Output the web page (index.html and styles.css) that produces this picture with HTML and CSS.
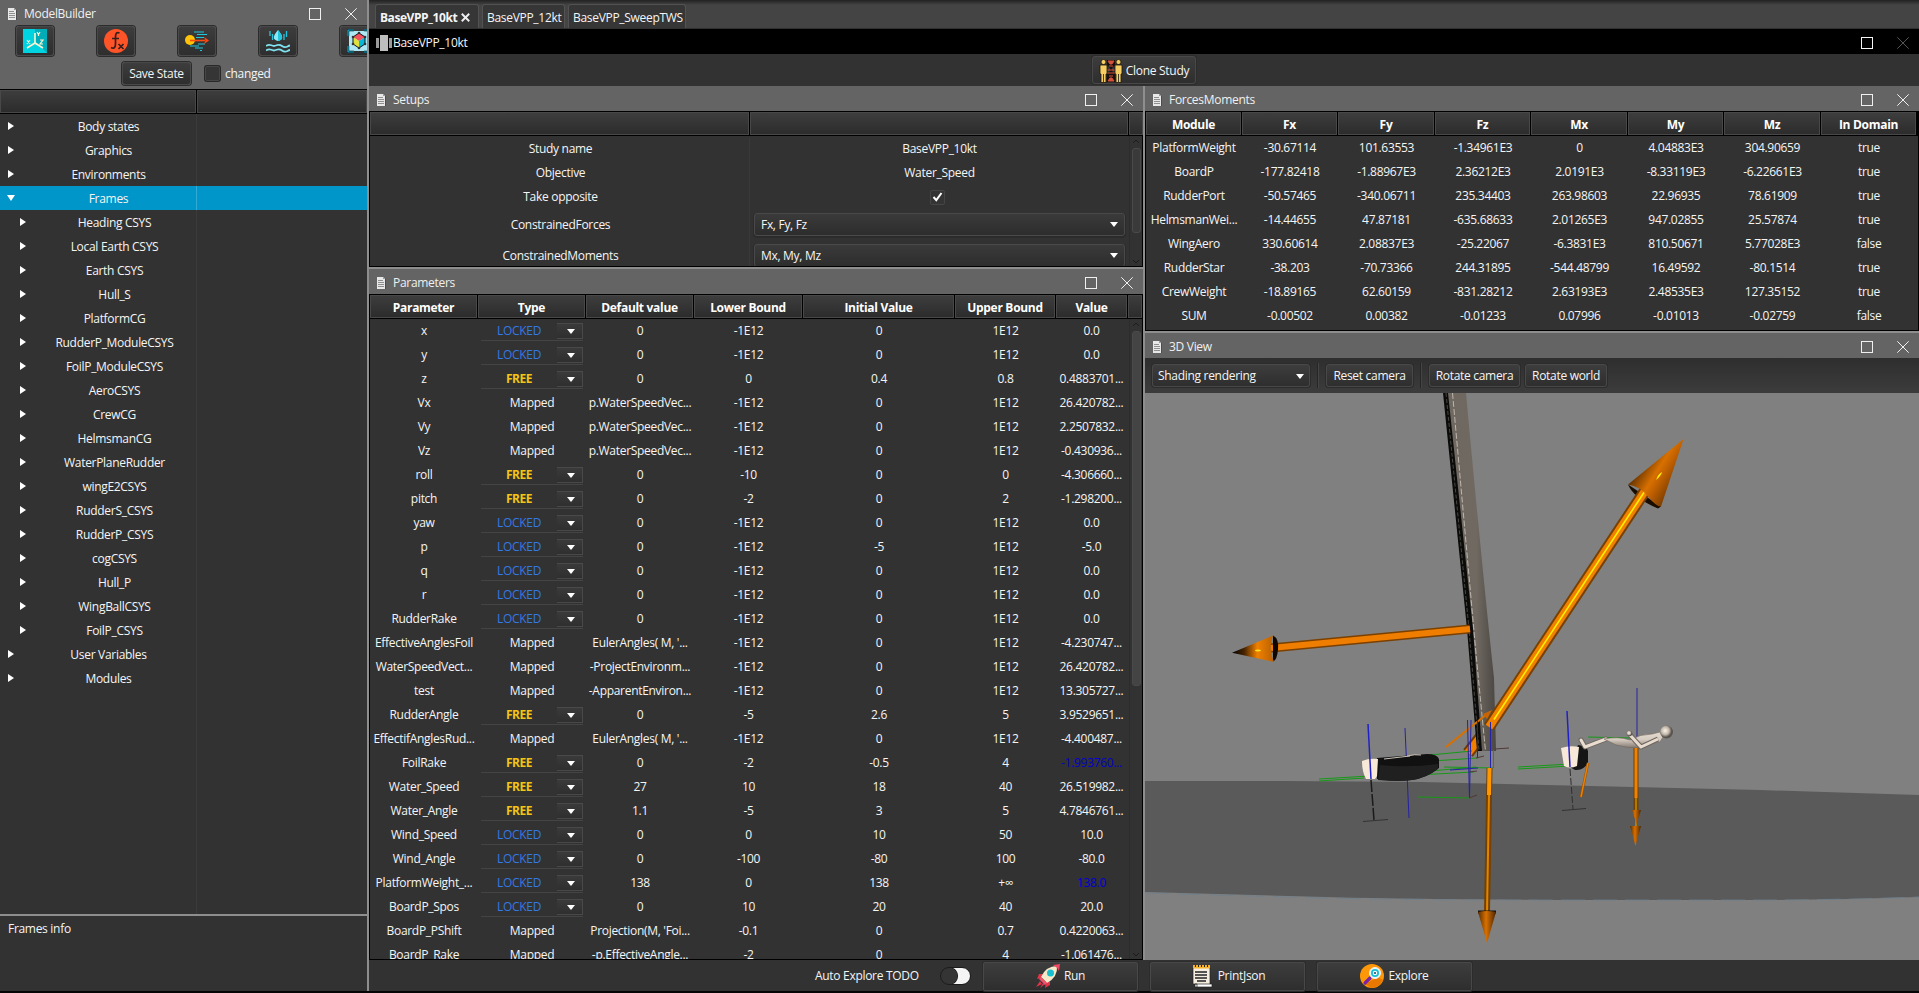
FILE: index.html
```html
<!DOCTYPE html>
<html lang="en">
<head>
<meta charset="utf-8">
<title>ModelBuilder</title>
<link rel="stylesheet" href="styles.css">
</head>
<body>
<svg class="defs" width="0" height="0">
  <symbol id="doc" viewBox="0 0 10 13"><path d="M1 1h6l2 2v10H1z" fill="#e8e8e8"/><path d="M7 1l2 2H7z" fill="#999"/><path d="M2 4.5h5M2 6.5h6M2 8.5h6M2 10.5h6" stroke="#8f8f8f"/><path d="M9.5 3v10" stroke="#4c4c4c"/></symbol>
  <symbol id="max" viewBox="0 0 12 12"><rect x=".5" y=".5" width="11" height="11" fill="none" stroke="currentColor"/></symbol>
  <symbol id="close" viewBox="0 0 12 12"><path d="M.3.3l11.4 11.4M11.7.3L.3 11.7" fill="none" stroke="currentColor"/></symbol>
</svg>
<div class="app">
  <aside class="builder">
    <div class="head">
      <div class="title"><svg class="doc"><use href="#doc"/></svg><span>ModelBuilder</span><svg class="win"><use href="#max"/></svg><svg class="win"><use href="#close"/></svg></div>
      <div class="tools">
        <button class="btn tool"><svg viewBox="0 0 24 24"><rect width="24" height="24" fill="#00d3e0"/><path d="M12 0h12v24L12 12z" fill="#00acb8"/><path d="M12 4v10L4 19M12 14l8 5" fill="none" stroke="#fff3cf" stroke-width="1.6"/><path d="M14 3l1.5 2.500L17 3M15.500 5v2M4 11l3 4M7 11l-3 4M17 11h3l-3 4h3" fill="none" stroke="#fff3cf" stroke-width="1.200"/></svg></button>
        <button class="btn tool"><svg viewBox="0 0 24 24"><circle cx="12" cy="12" r="12" fill="#ff5428"/><path d="M15.500 4c-3-1.500-4 1-4 4v7c0 4-2 5-4.500 3.500M8 9.500h7M14.500 15l5 5M19.500 15l-5 5" fill="none" stroke="#33201c" stroke-width="1.700"/></svg></button>
        <button class="btn tool"><svg viewBox="0 0 24 24"><path d="M9 3h10M12 5.500h10M11 8.500h8M5 17h9M13 15h7M10 19h8M15 21.500h2" stroke="#20c8df" stroke-width="1.200"/><circle cx="5" cy="11" r="5" fill="#ffc408"/><path d="M5 11.500h15" stroke="#ff4a12" stroke-width="1.600"/><path d="M19 8l5 3.500-5 3.500 1.500-3.500z" fill="#ff4a12"/></svg></button>
        <button class="btn tool"><svg viewBox="0 0 24 24"><path d="M12 1c6 7 5 10 0 11-5-1-6-4 0-11z" fill="#8ce8f5"/><path d="M12 1c6 7 5 10 0 11z" fill="#22c7df"/><path d="M4 2v5M6.500 5v6M18 5v6M20.500 2v6" stroke="#25c6dd" stroke-width="1.300"/><path d="M0 17c4-3 5 0 8 0s4-3 8 0 5 0 8-.5M0 21.500c4-3 5 0 8 0s4-3 8 0 5 0 8-.5" fill="none" stroke="#7fe3f2" stroke-width="1.800"/></svg></button>
        <button class="btn tool"><svg viewBox="0 0 24 24"><rect x="2" y="2" width="20" height="20" fill="#aee8f5"/><path d="M1 7V1h6M17 1h6v6M1 17v6h6M17 23h6v-6" fill="none" stroke="#000" stroke-width="2.400"/><path d="M1 7V1h6M17 1h6v6M1 17v6h6M17 23h6v-6" fill="none" stroke="#18bfe8" stroke-width="1.200"/><path d="M12 4l6 4-6 4-6-4z" fill="#f5505e"/><path d="M6 8l6 4v7l-6-4z" fill="#dfe13d"/><path d="M18 8l-6 4v7l6-4z" fill="#08b8d8"/><path d="M12 4l6 4v7l-6 4-6-4V8z" fill="none" stroke="#151515"/><g fill="#333"><circle cx="12" cy="4" r="1.300"/><circle cx="18" cy="8" r="1.300"/><circle cx="6" cy="8" r="1.300"/><circle cx="6" cy="15" r="1.300"/><circle cx="18" cy="15" r="1.300"/><circle cx="12" cy="19" r="1.300"/></g></svg></button>
      </div>
      <div class="save"><button class="btn state">Save State</button><span class="check"></span><span>changed</span></div>
    </div>
    <div class="hdr tree-cols"><div class="th"></div><div class="th"></div></div>
    <div class="tree" id="tree"></div>
    <div class="info">Frames info</div>
  </aside>

  <main class="study">
    <nav class="tabs"><div class="tab on">BaseVPP_10kt<svg viewBox="0 0 8 8"><path d="M.7.7l6.600 6.600M7.300.7L.7 7.300" stroke="#eee" stroke-width="1.700"/></svg></div><div class="tab">BaseVPP_12kt</div><div class="tab">BaseVPP_SweepTWS</div></nav>
    <div class="study-title"><svg class="pages" viewBox="0 0 16 16"><path d="M0 3h3v10H0zM13 3h3v10h-3z" fill="#9b9b9b"/><path d="M4 0h8v16H4z" fill="#bdbdbd"/></svg><span>BaseVPP_10kt</span><svg class="win"><use href="#max"/></svg><svg class="win dim"><use href="#close"/></svg></div>
    <div class="toolbar"><button class="btn clone"><svg viewBox="0 0 24 24"><path d="M8 1h8v5l-3 3v3l3 3v8H8v-8l3-3V9L8 6z" fill="#16100e"/><path d="M9 2h6l-2 3h-2zM8 11h8M8 14h8M9 22h6l-2-3h-2zM10 17h4M10 7h4" fill="#d8523b" stroke="#d8523b" stroke-width="1"/><g fill="#f5cd62" stroke="#1b1510" stroke-width=".8"><circle cx="4.500" cy="3" r="2.500"/><path d="M1 6h7v9H7v8.500H2V15H1z"/><circle cx="19.500" cy="3" r="2.500"/><path d="M16 6h7v9h-1v8.500h-5V15h-1z"/></g><path d="M4.500 15v8M19.500 15v8" stroke="#1b1510" stroke-width=".8"/></svg>Clone Study</button></div>

    <div class="work">
      <div class="left">
        <section class="setups">
          <div class="title"><svg class="doc"><use href="#doc"/></svg><span>Setups</span><svg class="win"><use href="#max"/></svg><svg class="win"><use href="#close"/></svg></div>
          <div class="hdr setup-cols"><div class="th"></div><div class="th"></div><div class="th"></div></div>
          <div class="scroller">
            <div class="setup-body">
              <div class="srow"><span>Study name</span><span>BaseVPP_10kt</span></div>
              <div class="srow"><span>Objective</span><span>Water_Speed</span></div>
              <div class="srow"><span>Take opposite</span><span><i class="tick"><svg viewBox="0 0 10 10"><path d="M1 5l2.800 3.200L9 1" fill="none" stroke="#fff" stroke-width="2"/></svg></i></span></div>
              <div class="srow tall"><span>ConstrainedForces</span><span><b class="combo">Fx, Fy, Fz<i class="arrow"></i></b></span></div>
              <div class="srow tall"><span>ConstrainedMoments</span><span><b class="combo">Mx, My, Mz<i class="arrow"></i></b></span></div>
            </div>
            <div class="bar"><svg viewBox="0 0 8 5"><path d="M1 4l3-3 3 3"/></svg><div class="thumb short"></div><svg viewBox="0 0 8 5"><path d="M1 1l3 3 3-3"/></svg></div>
          </div>
        </section>
        <section class="params">
          <div class="title"><svg class="doc"><use href="#doc"/></svg><span>Parameters</span><svg class="win"><use href="#max"/></svg><svg class="win"><use href="#close"/></svg></div>
          <div class="hdr param-cols"><div class="th">Parameter</div><div class="th">Type</div><div class="th">Default value</div><div class="th">Lower Bound</div><div class="th">Initial Value</div><div class="th">Upper Bound</div><div class="th">Value</div><div class="th"></div></div>
          <div class="scroller">
            <div class="param-body" id="params"></div>
            <div class="bar"><svg viewBox="0 0 8 5"><path d="M1 4l3-3 3 3"/></svg><div class="thumb long"></div><svg viewBox="0 0 8 5"><path d="M1 1l3 3 3-3"/></svg></div>
          </div>
        </section>
      </div>
      <div class="right">
        <section class="forces">
          <div class="title"><svg class="doc"><use href="#doc"/></svg><span>ForcesMoments</span><svg class="win"><use href="#max"/></svg><svg class="win"><use href="#close"/></svg></div>
          <div class="hdr force-cols"><div class="th">Module</div><div class="th">Fx</div><div class="th">Fy</div><div class="th">Fz</div><div class="th">Mx</div><div class="th">My</div><div class="th">Mz</div><div class="th">In Domain</div></div>
          <div class="force-body" id="forces"></div>
        </section>
        <section class="view">
          <div class="title"><svg class="doc"><use href="#doc"/></svg><span>3D View</span><svg class="win"><use href="#max"/></svg><svg class="win"><use href="#close"/></svg></div>
          <div class="view-tools"><button class="btn shading">Shading rendering<i class="arrow"></i></button><i class="sep"></i><button class="btn reset">Reset camera</button><i class="sep"></i><button class="btn rcam">Rotate camera</button><button class="btn rworld">Rotate world</button></div>
          <svg class="scene" viewBox="1145 393 774 567">
            <defs>
              <linearGradient id="mast" x1="0" x2="1"><stop offset="0" stop-color="#6e6860"/><stop offset=".6" stop-color="#6f6961"/><stop offset="1" stop-color="#4a4642"/></linearGradient>
              <linearGradient id="coneA" gradientUnits="userSpaceOnUse" x1="1636" y1="465" x2="1676" y2="490"><stop offset="0" stop-color="#4b2500"/><stop offset=".45" stop-color="#d87000"/><stop offset=".6" stop-color="#c06000"/><stop offset="1" stop-color="#6a3500"/></linearGradient>
              <linearGradient id="coneB" x1="0" x2="1"><stop offset="0" stop-color="#000"/><stop offset=".3" stop-color="#4a2500"/><stop offset=".6" stop-color="#f08000"/><stop offset="1" stop-color="#b86000"/></linearGradient>
              <linearGradient id="coneC" x1="0" x2="1"><stop offset="0" stop-color="#5b2d00"/><stop offset=".45" stop-color="#d87000"/><stop offset="1" stop-color="#4a2500"/></linearGradient>
              <linearGradient id="skin" x1="0" y1="0" x2="0" y2="1"><stop offset="0" stop-color="#e6dbd0"/><stop offset=".5" stop-color="#d5cabf"/><stop offset="1" stop-color="#857c74"/></linearGradient>
              <radialGradient id="ball" cx=".4" cy=".4"><stop offset="0" stop-color="#fff3e6"/><stop offset=".6" stop-color="#c2b7ac"/><stop offset="1" stop-color="#59534d"/></radialGradient>
            </defs>
            <path d="M1145 393h774v567h-774z" fill="#808080"/>
            <path d="M1145 781h140l136 1 170 4 169 4 159 5v102q-80 3-159 3h-200q-160-1-235-3l-180-5z" fill="#5a5a5a"/>
            <path d="M1145 893l180 5q75 2 235 2h200q79 0 159-3" fill="none" stroke="#6d7f8b" stroke-dasharray="24 8" stroke-width=".8"/>
            <path d="M1483 734L1468 753" stroke="#713a00" stroke-width="12"/><path d="M1483 734L1468 753" stroke="#f08000" stroke-width="8"/>
            <path d="M1447 393h19q6 66 14 148t14 137l2 73h-15q-3-70-12-150z" fill="url(#mast)"/>
            <path d="M1443 393h5l25 236 9 122h-5l-10-122z" fill="#0b0b0a"/>
            <path d="M1446 393l23 236 10 122" fill="none" stroke="#5a5752" stroke-dasharray="4 2" stroke-width=".8"/>
            <path d="M1452.500 393l24 266 9 92" fill="none" stroke="#c6c0b8" stroke-dasharray="6 2" stroke-width=".9"/>
            <path d="M1271 648L1470 629" stroke="#7a4000" stroke-width="9"/><path d="M1271 648L1470 629" stroke="#ef7d00" stroke-width="6"/>
            <path d="M1273 635.500q6 3 5 14t-5 12z" fill="#100800"/><path d="M1232 652.700l41-17.200q-5 14 1 26.500z" fill="url(#coneB)"/><ellipse cx="1258" cy="650.500" rx="3" ry="1" fill="#ffe020"/>
            <path d="M1628 484.500l33 22 -3 2q-24-10-30-24z" fill="#180c00"/>
            <path d="M1489 727L1645 491" stroke="#774000" stroke-width="12"/><path d="M1489 727L1645 491" stroke="#f08000" stroke-width="8"/><path d="M1494 719.500L1645 491" stroke="#fff000" stroke-width="1.600"/>
            <path d="M1683.500 439L1628 484.500q12 2 20 12t13 10z" fill="url(#coneA)"/><path d="M1656 480q2-6 6-8-1 4-6 8z" fill="#fff200"/>
            <path d="M1446 747L1487 714" stroke="#d87000" stroke-width="2"/><path d="M1492 710l-9 4 4 5z" fill="#c96400"/>
            <g stroke="#169916" stroke-width="1"><path d="M1319 779l50-3M1319 781l45-3M1418 772l58-5M1416 775l58-3M1432 761l46-3M1430 755l42-4M1418 797l52 1M1444 767l49 1M1493.500 750v18M1518 767l52-3M1518 769l52-3M1588 737l42 1"/></g>
            <g stroke="#2522a5" stroke-width="1"><path d="M1405 728l4 90M1467.500 720l2 78M1471 720l-1.500 78M1477.500 720v38M1490.500 722v46M1450 770l28-2M1637 688v52"/></g>
            <path d="M1495 749l14-1M1476 758l8-2M1469 772l8-1M1469 798l8-3" stroke="#513838"/>
            <path d="M1377 758l50-4q10 0 12 5v9q-12 10-27 12-14 2-35-1z" fill="#111"/><path d="M1380 765q30 3 58-1v5q-13 9-26 11-14 2-34 0z" fill="#202020"/><path d="M1384 759l26-3M1407 756q8-2 14-1" stroke="#c8c0b6" fill="none"/>
            <path d="M1362 761q7-3 16-2l-1 17-2 3h-9q-4-7-4-18z" fill="#f7e8d8"/>
            <path d="M1368 724l3 55" stroke="#2020c8" stroke-width="1.500"/><path d="M1371 780l3 40" stroke="#1b1b1b" stroke-width="1.500" stroke-dasharray="12 2"/><path d="M1363 821.500l25-2" stroke="#333"/>
            <path d="M1578 745q9 1 10 6v11q-4 9-13 8l-5-3z" fill="#151515"/><path d="M1561 748q9-3 18-1l-2 19q-7 3-13 0z" fill="#f7e8d8"/><path d="M1567 711l3 56" stroke="#2020c8" stroke-width="1.500"/><path d="M1570 769l3 40" stroke="#303030" stroke-dasharray="7 2"/><path d="M1562 810.500l24-2" stroke="#333"/>
            <path d="M1588 763l-7 34" stroke="#9a5200" stroke-width="2.500"/><path d="M1588 763l-7 34" stroke="#f08000" stroke-width="1.400"/>
            <g fill="none" stroke-linejoin="round" stroke-linecap="round">
              <path d="M1581 740l4 7 21-8" stroke="#6e655d" stroke-width="5"/><path d="M1581 740l4 7 21-8" stroke="#e9ddd1" stroke-width="3"/>
            </g>
            <path d="M1604 739q14-3 26 1 10-6 22-6l8-2 3 5-3 5q-12 1-18 5-14 2-26-2z" fill="url(#skin)" stroke="#6e655d" stroke-width=".6"/>
            <path d="M1630 735l11 12 17-8" fill="none" stroke="#6e655d" stroke-width="5" stroke-linejoin="round"/><path d="M1630 735l11 12 17-8" fill="none" stroke="#e7dbcf" stroke-width="3" stroke-linejoin="round"/><circle cx="1629.500" cy="733.500" r="2.800" fill="url(#ball)"/><circle cx="1666.500" cy="732" r="6.500" fill="url(#ball)"/>
            <path d="M1636 748v67" stroke="#754000" stroke-width="5"/><path d="M1636 748v50" stroke="#ef8200" stroke-width="3"/><path d="M1636 798v28" stroke="#bf9000" stroke-width="1.500"/><path d="M1632 810h9l-4.500 14zM1630 826h11l-5.500 20z" fill="url(#coneC)"/>
            <path d="M1489.500 768l-2.500 144" stroke="#754000" stroke-width="6"/><path d="M1489.500 768l-.5 27" stroke="#ff9800" stroke-width="4"/><path d="M1489 795l-2 117" stroke="#df8500" stroke-width="2"/>
            <path d="M1478 910.500h18v3h-18z" fill="#171008"/><path d="M1478 912q9-2 18 0l-9 31z" fill="url(#coneC)"/>
          </svg>
        </section>
      </div>
    </div>
    <footer class="foot"><span class="auto">Auto Explore TODO</span><span class="toggle"></span>
      <button class="btn act"><svg viewBox="0 0 24 24"><path d="M7 10H3l-2 5 5-1zM14 17v4l-5 3 1-6zM4 17l-4 6 6-3zM7 19l-3 5 5-4z" fill="#e0354b"/><path d="M5 13Q10 2 21 2q1 11-10 17z" fill="#f7e9c8"/><path d="M17 1l7-1-1 7q-2-4-6-6z" fill="#f04862"/><circle cx="14.500" cy="9" r="3.500" fill="#19bed0"/><path d="M5 13l6 6-2 2-6-6z" fill="#ef536b"/></svg>Run</button>
      <button class="btn act"><svg viewBox="0 0 24 24"><path d="M3 4h17v16H3z" fill="#f5ede0"/><path d="M3 1h17v3.500H3z" fill="#f5b42a"/><path d="M5 2h1M8 2h1M11 2h1M14 2h1M17 2h1" stroke="#222" stroke-width="2"/><path d="M5 8h12M5 11h12M5 14h12M7 17h9" stroke="#222" stroke-width="1.300"/><path d="M5 20h17v3H5z" fill="#fff" stroke="#222" stroke-width=".7"/><path d="M3 4v16h4v3M20 4v16" fill="none" stroke="#222" stroke-width=".7"/></svg>PrintJson</button>
      <button class="btn act"><svg viewBox="0 0 24 24"><circle cx="12" cy="12" r="12" fill="#ff9808"/><path d="M5 20L18 13l5 3q-4 8-12 8z" fill="#e87800"/><path d="M10 14l-5 5" stroke="#7b22a4" stroke-width="3.200" stroke-linecap="round"/><circle cx="15" cy="9" r="5.500" fill="#e7f8fb" stroke="#f0f0f0"/><circle cx="15" cy="9" r="4" fill="#18bfd6"/><circle cx="15" cy="9" r="2.200" fill="#fff"/><circle cx="15" cy="9" r="1" fill="#143c60"/></svg>Explore</button>
    </footer>
  </main>
</div>
<script src="app.js"></script>
</body>
</html>
```
FILE: styles.css
```css
* { box-sizing: border-box; }
body { margin: 0; background: #323232; overflow: hidden; font-family: "Open Sans", "Noto Sans", sans-serif; font-size: 12px; line-height: 16px; letter-spacing: -0.3px; color: #f5f5f5; }
.defs { display: block; height: 0; }
svg { flex: none; }
i, b { font-style: normal; font-weight: 400; }
.app { width: 1919px; height: 993px; display: grid; grid-template-columns: 369px 1550px; border-bottom: 2px solid #050505; }
.builder { border-right: 2px solid #8e8e8e; height: 991px; overflow: hidden; display: flex; flex-direction: column; }
.head { height: 89px; flex: none; background: #646464; }
.title { height: 25px; flex: none; background: #646464; display: flex; align-items: center; padding: 3px 10px 0 7px; color: #f0f0f0; }
.title span, .study-title span { flex: 1; }
.doc { width: 10px; height: 13px; margin: 0 7px 2px 0; }
.win { width: 12px; height: 12px; margin-left: 24px; }
.dim { color: #555; }
.btn { border: 1px solid #484848; border-radius: 3px; background: linear-gradient(#3d3d3d, #2e2e2e); color: #f5f5f5; font: inherit; letter-spacing: inherit; padding: 0; display: flex; align-items: center; justify-content: center; box-shadow: 0 0 0 1px #2c2c2c; flex: none; }
.tools { display: flex; gap: 43px; padding: 1px 0 0 16px; }
.tool { width: 38px; height: 30px; }
.tool svg { width: 24px; height: 24px; }
.save { display: flex; align-items: center; height: 25px; margin-top: 5px; padding-left: 122px; }
.state { width: 69px; height: 23px; padding-top: 1px; }
.check { width: 15px; height: 15px; margin: 0 5px 0 14px; border: 1px solid #464646; border-radius: 2px; background: #353535; box-shadow: 0 0 0 1px #292929; }
.hdr { display: grid; height: 25px; flex: none; padding: 1px 0; gap: 1px; background: #000; font-weight: 700; }
.th { border: 1px solid #484848; background: linear-gradient(#3d3d3d, #2c2c2c); text-align: center; padding-top: 4px; white-space: nowrap; color: #fff; }
.tree-cols { grid-template-columns: 196px 170px; }
.tree { flex: 1; background: linear-gradient(#3b3b3b, #3b3b3b) 196px 0 / 1px 100% no-repeat; }
.node { height: 24px; width: 197px; border-right: 1px solid #3b3b3b; display: flex; align-items: center; padding-left: 8px; padding-top: 1px; }
.node.sub { padding-left: 20px; }
.node span { flex: 1; text-align: center; }
.node::before { content: ""; border-left: 6px solid #fff; border-top: 4px solid transparent; border-bottom: 4px solid transparent; width: 0; margin: -2px 7px 0 0; }
.node.open { width: 367px; padding-right: 170px; border: 0; background: linear-gradient(#33abd6, #33abd6) 196px 0 / 1px 100% no-repeat #0096c9; }
.node.open::before { border-top: 6px solid #fff; border-left: 4px solid transparent; border-right: 4px solid transparent; border-bottom: 0; margin: -2px 5px 0 -1px; }
.info { height: 77px; border-top: 2px solid #8e8e8e; padding: 5px 8px; }
.study { display: flex; flex-direction: column; height: 991px; }
.tabs { height: 29px; display: flex; align-items: flex-end; padding-left: 6px; gap: 3px; background: linear-gradient(#222, #444 5px); border-bottom: 1px solid #303030; }
.tab { height: 24px; padding: 5px 4px 0; border: 1px solid #525252; border-bottom: 0; border-radius: 3px 3px 0 0; background: #363636; white-space: nowrap; width: 83px; }
.tab.on { width: 104px; font-weight: 700; letter-spacing: -.45px; }
.tab:last-child { width: 118px; }
.tab svg { width: 9px; height: 9px; margin-left: 4px; }
.study-title { height: 25px; background: #000; display: flex; align-items: center; padding: 2px 10px 0 7px; }
.pages { width: 16px; height: 16px; margin-right: 2px; }
.study-title span { margin-left: -1px; }
.toolbar { height: 32px; display: flex; padding: 2px 0 0 723px; }
.clone { width: 104px; height: 28px; gap: 3px; padding-top: 1px; }
.clone svg { width: 24px; height: 24px; }
.work { display: grid; grid-template-columns: 776px 774px; height: 874px; }
.left { border-right: 2px solid #8e8e8e; }
.setups { height: 183px; display: flex; flex-direction: column; border-bottom: 2px solid #8e8e8e; }
.setup-cols { grid-template-columns: 379px 378px 14px; padding-left: 1px; }
.scroller { display: flex; flex: 1; min-height: 0; border: 1px solid #000; border-top: 0; }
.setup-body { width: 759px; overflow: hidden; padding-top: 1px; }
.srow { display: grid; grid-template-columns: 379px 380px; height: 24px; align-items: center; text-align: center; }
.srow > span:first-child { padding-left: 2px; }
.srow > span:last-child { border-left: 1px solid #393939; height: 100%; display: flex; align-items: center; justify-content: center; }
.tall { height: 31px; }
.combo { width: 371px; height: 23px; border: 1px solid #494949; border-radius: 3px; background: linear-gradient(#3a3a3a, #2d2d2d); display: flex; align-items: center; justify-content: space-between; padding: 0 6px; box-shadow: 0 1px 0 1px #2b2b2b; }
.arrow { border-top: 5px solid #fff; border-left: 4px solid transparent; border-right: 4px solid transparent; }
.tick { width: 15px; height: 15px; display: flex; align-items: center; justify-content: center; margin-right: 4px; border: 1px solid #454545; border-radius: 2px; background: #343434; }
.tick svg { width: 11px; height: 10px; }
.bar { flex: 1; border-left: 1px solid #2c2c2c; display: flex; flex-direction: column; align-items: center; justify-content: space-between; padding: 3px 0 2px; }
.bar svg { width: 8px; height: 5px; fill: none; stroke: #1b1b1b; }
.thumb { width: 9px; border: 1px solid #4a4a4a; border-radius: 3px; background: #3a3a3a; margin: 4px 0 auto; }
.short { height: 85px; }
.long { height: 355px; background: #444; }
.params { height: 691px; display: flex; flex-direction: column; }
.param-cols { grid-template-columns: 107px 107px 107px 108px 151px 100px 71px 14px; padding-left: 1px; }
.param-body { width: 759px; overflow: hidden; }
.prow { display: grid; grid-template-columns: 108px 108px 108px 109px 152px 101px 71px; height: 24px; align-items: center; text-align: center; white-space: nowrap; }
.prow .type { display: flex; align-items: center; height: 19px; width: 102px; margin: 1px 0 0 3px; border-bottom: 1px solid #444; }
.type b { width: 76px; }
.locked b { color: #3279e2; }
.free b { color: #f2c413; font-weight: 700; letter-spacing: -.45px; }
.type em { width: 26px; height: 16px; border: 1px solid #494949; border-left: 0; background: linear-gradient(#3a3a3a, #2f2f2f); display: flex; align-items: center; justify-content: center; padding-left: 3px; }
.changed { color: #0000d0; }
.forces { height: 247px; display: flex; flex-direction: column; border-bottom: 2px solid #8e8e8e; }
.force-cols { grid-template-columns: 95px 95px 96px 95px 96px 95px 96px 95px; padding-left: 1px; }
.force-body { flex: 1; border: 1px solid #000; border-top: 0; }
.frow { display: grid; grid-template-columns: 96px 96px 97px 96px 97px 96px 97px 96px; height: 24px; line-height: 24px; text-align: center; white-space: nowrap; }
.view-tools { height: 35px; background: linear-gradient(#2e2e2e, #3c3c3c); display: flex; align-items: center; padding-left: 7px; }
.view-tools .btn { height: 23px; padding-top: 1px; }
.view-tools .shading { width: 158px; justify-content: space-between; padding: 1px 5px 0; }
.sep { width: 2px; height: 25px; margin: 0 7px 0 7px; background: #262626; border-right: 1px solid #454545; }
.reset { width: 87px; }
.rcam { width: 91px; margin-right: 5px; }
.rworld { width: 82px; }
.scene { display: block; width: 774px; height: 567px; }
.foot { height: 31px; display: flex; align-items: center; padding: 1px 0 0 446px; gap: 12px; }
.auto { width: 113px; }
.toggle { width: 31px; height: 18px; border-radius: 9px; background: radial-gradient(circle at 8px 8px, #343434 8px, #1e1e1e 8.5px, #f5f5f5 9.5px); border: 1px solid #1c1c1c; }
.act { width: 155px; height: 29px; border-radius: 2px; gap: 4px; }
.act svg { width: 24px; height: 24px; }
```
FILE: app.js
```javascript
const tree = [
  "Body states", "Graphics", "Environments", "*Frames",
  "-Heading CSYS", "-Local Earth CSYS", "-Earth CSYS", "-Hull_S", "-PlatformCG", "-RudderP_ModuleCSYS",
  "-FoilP_ModuleCSYS", "-AeroCSYS", "-CrewCG", "-HelmsmanCG", "-WaterPlaneRudder", "-wingE2CSYS",
  "-RudderS_CSYS", "-RudderP_CSYS", "-cogCSYS", "-Hull_P", "-WingBallCSYS", "-FoilP_CSYS",
  "User Variables", "Modules"
];
document.getElementById("tree").innerHTML = tree.map(t => {
  const cls = t[0] === "-" ? " sub" : t[0] === "*" ? " open" : "";
  return `<div class="node${cls}"><span>${t.replace(/^[-*]/, "")}</span></div>`;
}).join("");

const params = `x|L|0|-1E12|0|1E12|0.0
y|L|0|-1E12|0|1E12|0.0
z|F|0|0|0.4|0.8|0.4883701...
Vx|M|p.WaterSpeedVec...|-1E12|0|1E12|26.420782...
Vy|M|p.WaterSpeedVec...|-1E12|0|1E12|2.2507832...
Vz|M|p.WaterSpeedVec...|-1E12|0|1E12|-0.430936...
roll|F|0|-10|0|0|-4.306660...
pitch|F|0|-2|0|2|-1.298200...
yaw|L|0|-1E12|0|1E12|0.0
p|L|0|-1E12|-5|1E12|-5.0
q|L|0|-1E12|0|1E12|0.0
r|L|0|-1E12|0|1E12|0.0
RudderRake|L|0|-1E12|0|1E12|0.0
EffectiveAnglesFoil|M|EulerAngles( M, '...|-1E12|0|1E12|-4.230747...
WaterSpeedVect...|M|-ProjectEnvironm...|-1E12|0|1E12|26.420782...
test|M|-ApparentEnviron...|-1E12|0|1E12|13.305727...
RudderAngle|F|0|-5|2.6|5|3.9529651...
EffectifAnglesRud...|M|EulerAngles( M, '...|-1E12|0|1E12|-4.400487...
FoilRake|F|0|-2|-0.5|4|!-1.993760...
Water_Speed|F|27|10|18|40|26.519982...
Water_Angle|F|1.1|-5|3|5|4.7846761...
Wind_Speed|L|0|0|10|50|10.0
Wind_Angle|L|0|-100|-80|100|-80.0
PlatformWeight_...|L|138|0|138|+∞|!138.0
BoardP_Spos|L|0|10|20|40|20.0
BoardP_PShift|M|Projection(M, 'Foi...|-0.1|0|0.7|0.4220063...
BoardP_Rake|M|-p.EffectiveAngle...|-2|0|4|-1.061476...`;
const picker = (cls, label) => `<span class="type ${cls}"><b>${label}</b><em><i class="arrow"></i></em></span>`;
const kinds = { L: picker("locked", "LOCKED"), F: picker("free", "FREE"), M: "<span>Mapped</span>" };
document.getElementById("params").innerHTML = params.split("\n").map(line => {
  const cells = line.split("|").map((c, i) => {
    if (i === 1) return kinds[c];
    return c[0] === "!" ? `<span class="changed">${c.slice(1)}</span>` : `<span>${c}</span>`;
  });
  return `<div class="prow">${cells.join("")}</div>`;
}).join("");

const forces = `PlatformWeight|-30.67114|101.63553|-1.34961E3|0|4.04883E3|304.90659|true
BoardP|-177.82418|-1.88967E3|2.36212E3|2.0191E3|-8.33119E3|-6.22661E3|true
RudderPort|-50.57465|-340.06711|235.34403|263.98603|22.96935|78.61909|true
HelmsmanWei...|-14.44655|47.87181|-635.68633|2.01265E3|947.02855|25.57874|true
WingAero|330.60614|2.08837E3|-25.22067|-6.3831E3|810.50671|5.77028E3|false
RudderStar|-38.203|-70.73366|244.31895|-544.48799|16.49592|-80.1514|true
CrewWeight|-18.89165|62.60159|-831.28212|2.63193E3|2.48535E3|127.35152|true
SUM|-0.00502|0.00382|-0.01233|0.07996|-0.01013|-0.02759|false`;
document.getElementById("forces").innerHTML = forces.split("\n").map(line =>
  `<div class="frow">${line.split("|").map(c => `<span>${c}</span>`).join("")}</div>`).join("");
```
